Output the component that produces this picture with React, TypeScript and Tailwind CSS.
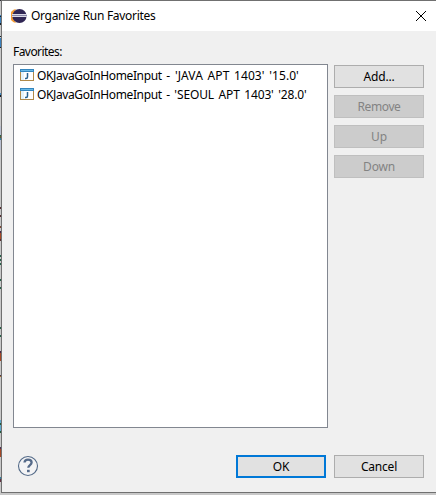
import React from "react";

const fragments: [number, number, string][] = [
  [0, 1, "#303038"], [15, 8, "#3b81bd"], [16, 1, "#17242d"], [23, 2, "#17242d"], [36, 1, "#17242d"], [38, 9, "#3b81bd"], [47, 1, "#17242d"],
  [93, 2, "#428bc2"], [95, 2, "#101b28"], [126, 9, "#b9bfd0"], [135, 1, "#206744"], [136, 2, "#605a37"], [138, 2, "#347e9c"], [140, 10, "#b9bfd0"],
  [207, 2, "#552f32"], [215, 2, "#552f32"], [226, 2, "#7b4936"], [231, 2, "#482548"], [233, 6, "#a54825"], [239, 2, "#552f32"],
  [255, 2, "#276149"], [259, 2, "#276149"], [263, 2, "#276149"], [279, 2, "#276149"], [287, 2, "#276149"],
  [327, 2, "#276149"], [335, 2, "#276149"], [351, 2, "#482548"], [353, 8, "#a54825"], [375, 1, "#4d314a"], [376, 1, "#a67225"],
  [420, 3, "#61a9cd"], [423, 2, "#245b3c"], [425, 6, "#61a9cd"], [431, 2, "#245b3c"], [447, 2, "#513052"], [449, 8, "#a54825"], [477, 2, "#347e9c"], [479, 3, "#633242"],
];

function EclipseIcon() {
  return (
    <svg width="16" height="16" viewBox="0 0 16 16" className="shrink-0">
      <path d="M5 .9A7.2 7.2 0 0 0 5 15.1A12 12 0 0 1 5 .9Z" fill="#f39a32" />
      <circle cx="8.5" cy="8" r="7.1" fill="#302654" />
      <path d="M1 6.5h14.8M1 8.5h14.8" stroke="#dadae6" strokeWidth="1" />
      <path d="M1 7.5h15" stroke="#8985a8" strokeWidth="1" />
    </svg>
  );
}

function JavaIcon() {
  return (
    <svg width="15" height="13" viewBox="0 0 15 13" className="shrink-0" shapeRendering="crispEdges">
      <path d="M0 0h14v12H0z" fill="#b18a49" />
      <path d="M1 3h12v8H1z" fill="#e4f3fb" />
      <path d="M4 3h9v8H4z" fill="#fff" />
      <path d="M0 0h14v3H0z" fill="#3485bd" />
      <path d="M1 1h12v1H1z" fill="#67b9e6" />
      <path d="M7.5 4v4q0 1.5-1.5 1.5H5" fill="none" stroke="#28628f" strokeWidth="1.5" shapeRendering="auto" />
    </svg>
  );
}

function Action({ children, disabled = false, primary = false }: { children: React.ReactNode; disabled?: boolean; primary?: boolean }) {
  return (
    <button disabled={disabled} className={`flex h-[23px] w-[90px] items-center justify-center text-[12px] leading-4 tracking-[-0.2px] ${disabled ? "border border-[#bfbfbf] bg-[#cccccc] text-[#838383]" : primary ? "border-2 border-[#0078d7] bg-[#e1e1e1]" : "border border-[#adadad] bg-[#e1e1e1]"}`}>
      {children}
    </button>
  );
}

export default function App() {
  return (
    <main className="relative flex h-[495px] w-[436px] flex-col overflow-hidden bg-[#c8c8c8] pl-px font-['Noto_Sans','Noto_Sans_CJK_KR',sans-serif] text-[12px] text-black">
      {fragments.map(([y, h, color]) => (
        <i key={y} className="absolute left-0 w-px" style={{ top: y, height: h, backgroundColor: color }} />
      ))}
      <section className="flex h-[493px] w-[435px] flex-col border-t border-b border-l border-[#707070] bg-[#f0f0f0]">
        <header className="flex h-[30px] shrink-0 items-center bg-white pl-[9px]">
          <EclipseIcon />
          <h1 className="ml-1 text-[12px] font-normal tracking-[-0.3px]">Organize Run Favorites</h1>
          <svg className="mr-[9px] ml-auto" width="12" height="12" viewBox="0 0 12 12" stroke="#000" strokeWidth="1"><path d="M1 1l10 10M11 1L1 11" /></svg>
        </header>
        <div className="ml-[11px] flex h-[33px] shrink-0 items-end pb-[4px] text-[12px] leading-4 tracking-[-0.55px]">Favorites:</div>
        <div className="flex pl-[11px]">
          <ul className="flex h-[364px] w-[315px] flex-col border border-[#828790] bg-white pt-px pl-[6px]">
            <li className="flex h-[19px] items-center gap-[2px] whitespace-pre"><JavaIcon /><span className="tracking-[-0.38px]">OKJavaGoInHomeInput<span className="tracking-[0.07px] [word-spacing:1.5px]"> - 'JAVA APT 1403' '15.0'</span></span></li>
            <li className="flex h-[19px] items-center gap-[2px] whitespace-pre"><JavaIcon /><span className="tracking-[-0.38px]">OKJavaGoInHomeInput<span className="tracking-[-0.13px] [word-spacing:1.5px]"> - 'SEOUL APT 1403' '28.0'</span></span></li>
          </ul>
          <div className="ml-[6px] flex flex-col gap-[7px] pt-px">
            <Action>Add...</Action><Action disabled><span className="tracking-[-0.4px]">Remove</span></Action><Action disabled>Up</Action><Action disabled>Down</Action>
          </div>
        </div>
        <footer className="mt-[27px] flex h-[23px] items-center gap-2 pl-[15px]">
          <svg className="mb-[2px]" width="22" height="22" viewBox="0 0 22 22" fill="none">
            <circle cx="11" cy="11" r="9.5" fill="#f4f4f5" stroke="#526987" strokeWidth="1.1" />
            <path d="M7.5 7.5C7.7 5.4 9 4.7 11 4.7c2.2 0 3.6 1 3.6 2.8 0 2.6-3.3 2.6-3.3 5.3" stroke="#566b8a" strokeWidth="2.3" />
            <path d="M10 14.8h2.7v2.4H10z" fill="#566b8a" />
          </svg>
          <div className="ml-auto flex gap-2 pr-3"><Action primary>OK</Action><Action>Cancel</Action></div>
        </footer>
      </section>
    </main>
  );
}
